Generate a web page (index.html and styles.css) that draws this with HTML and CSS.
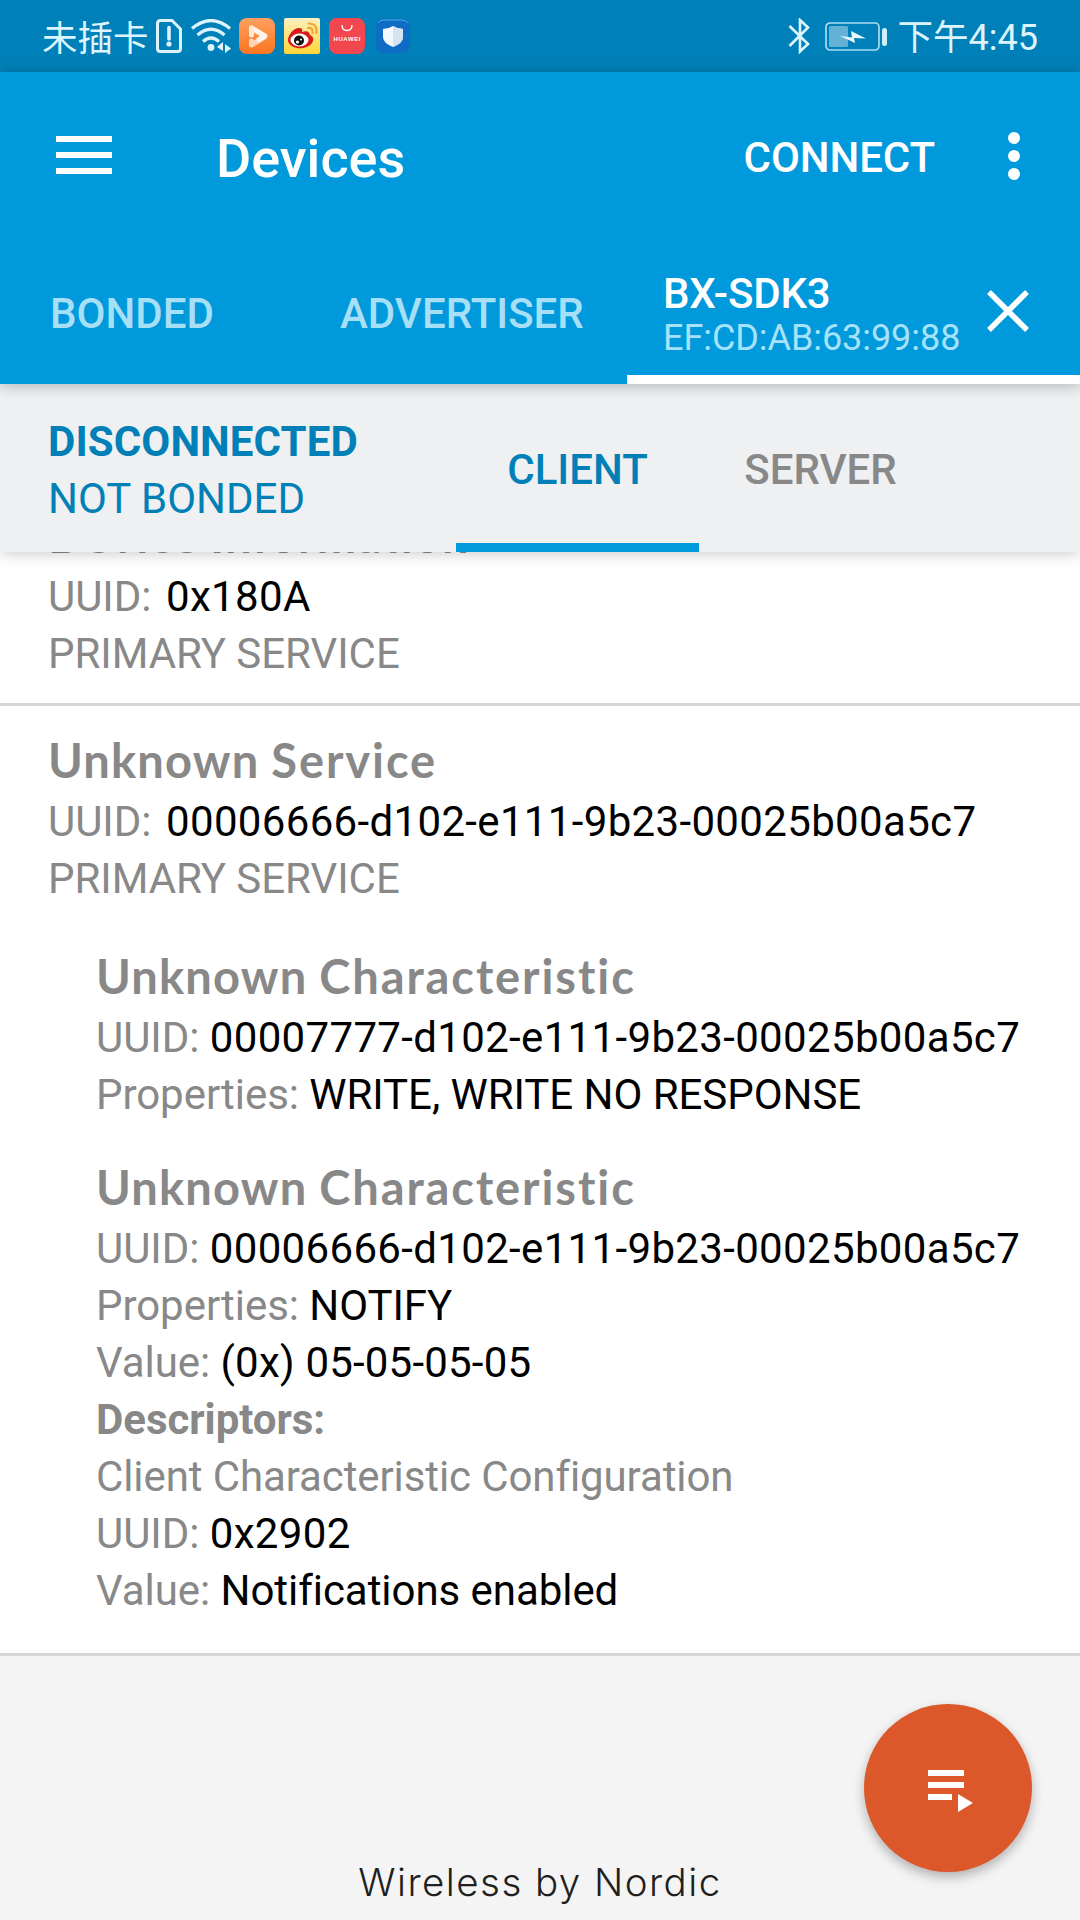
FILE: index.html
```html
<!DOCTYPE html>
<html lang="en">
<head>
<meta charset="utf-8">
<title>Devices</title>
<link rel="stylesheet" href="styles.css">
</head>
<body>
<div class="statusbar">
  <span class="carrier" lang="zh-CN">未插卡</span>
  <svg class="sim" width="26" height="34" viewBox="0 0 26 34" fill="none" stroke="#def4fd" stroke-width="3"><path d="M4.500 1.500H16L24.500 10V29.500Q24.500 32.500 21.500 32.500H4.500Q1.500 32.500 1.500 29.500V4.500Q1.500 1.500 4.500 1.500Z"/><path d="M13 8.500V20" stroke-width="3.600" stroke-linecap="round"/><circle cx="13" cy="25" r="2.600" fill="#def4fd" stroke="none"/></svg>
  <svg class="wifi" width="40" height="34" viewBox="0 0 40 34" fill="none" stroke="#def4fd" stroke-width="3.200"><path d="M1 9.500Q20-6.500 39 9.500"/><path d="M6.500 16Q20 4.500 33.500 16"/><path d="M12 22.500Q20 15.500 28 22.500"/><g fill="#def4fd" stroke="none"><circle cx="20" cy="28.500" r="3.400"/><path d="M26 28L32 23V32ZM34 25L40 29.500L34 34Z"/></g></svg>
  <svg class="app video" width="36" height="36" viewBox="0 0 36 36"><defs><linearGradient id="orange" x2="0" y2="1"><stop stop-color="#ff9f5e"/><stop offset="1" stop-color="#fb7521"/></linearGradient></defs><rect width="36" height="36" rx="8" fill="url(#orange)"/><g fill="none" stroke-linecap="round" stroke-linejoin="round" stroke-width="5"><path d="M12.500 23V27L25.500 19" stroke="#ffd3b5"/><path d="M12.500 10L26 18L20 21.500" stroke="#fff4eb"/><path d="M12.500 10V17" stroke="#ffe9d9"/></g></svg>
  <svg class="app weibo" width="36" height="36" viewBox="0 0 36 36"><defs><linearGradient id="yellow" x2="0" y2="1"><stop stop-color="#fdf0c1"/><stop offset="1" stop-color="#fed634"/></linearGradient></defs><rect width="36" height="36" rx="2" fill="url(#yellow)"/><path d="M4 22C4 17 10 9 16 10Q19 10.500 18 14Q25 11.500 26 17Q30 18.500 29 23C27 29 19 31 13 30C8 29 4 26 4 22Z" fill="#d91b1b"/><ellipse cx="15.500" cy="22" rx="9" ry="6.500" fill="#fff"/><ellipse cx="15" cy="22.500" rx="5" ry="5" fill="#111"/><circle cx="13.500" cy="24" r="1.600" fill="#fff"/><circle cx="17" cy="21.500" r="1" fill="#fff"/><path d="M24.500 5.500Q33.500 5 32.500 15M24 10Q29.500 9.500 28.500 15" fill="none" stroke="#f5a32b" stroke-width="2.200" stroke-linecap="round"/></svg>
  <svg class="app market" width="36" height="36" viewBox="0 0 36 36"><rect width="36" height="36" rx="8" fill="#f2474e"/><path d="M13 7Q13 12.500 18 12.500T23 7" fill="none" stroke="#fff" stroke-width="1.300"/><text class="brand" x="18" y="23.200" text-anchor="middle" textLength="27">HUAWEI</text></svg>
  <svg class="app shield" width="34" height="34" viewBox="0 0 34 34"><rect width="34" height="34" rx="7" fill="#0f6cc4"/><path d="M2 4Q4 1 8 1H26Q30 1 32 4" fill="none" stroke="#47adee"/><path d="M17 7Q21.500 10 27 10V18Q27 24 17 28Q7 24 7 18V10Q12.500 10 17 7Z" fill="#f2f8fd"/><path d="M17 7Q21.500 10 27 10V18Q27 24 17 28Z" fill="#d3e3f0"/></svg>
  <div class="status-right">
    <svg class="bt" width="22" height="36" viewBox="0 0 22 36" fill="none" stroke="#def4fd" stroke-width="2.600"><path d="M1.500 8L20 26L12 33.500V2L20 9.500L1.500 28"/></svg>
    <svg class="battery" width="62" height="30" viewBox="0 0 62 30"><rect x="1" y="1" width="53" height="27" rx="4" fill="none" stroke="#a9daef" stroke-width="1.700"/><rect x="4" y="4" width="19" height="21" rx="1.500" fill="#63b1d5"/><path d="M15 14L27 15.500L26 9L41 16.500L29 16L30 21Z" fill="#e8f8ff"/><rect x="57" y="6" width="5" height="18" rx="2.500" fill="#d2eefa"/></svg>
    <span class="clock"><span class="zh" lang="zh-CN">下午</span>4:45</span>
  </div>
</div>
<header class="appbar">
  <div class="toolbar">
    <svg class="menu" width="56" height="38" viewBox="0 0 56 38" fill="#fff"><path d="M0 0H56V6H0ZM0 16H56V22H0ZM0 32H56V38H0Z"/></svg>
    <h1 class="title">Devices</h1>
    <span class="connect">CONNECT</span>
    <svg width="12" height="48" viewBox="0 0 12 48" fill="#fff"><circle cx="6" cy="6" r="6"/><circle cx="6" cy="24" r="6"/><circle cx="6" cy="42" r="6"/></svg>
  </div>
  <nav class="tabs">
    <span class="tab bonded">BONDED</span>
    <span class="tab advertiser">ADVERTISER</span>
    <div class="tab-device">
      <div class="device"><span class="name">BX-SDK3</span><span class="address">EF:CD:AB:63:99:88</span></div>
      <svg class="close" width="42" height="42" viewBox="0 0 42 42" fill="none" stroke="#fff" stroke-width="5.500"><path d="M2 2L40 40M40 2L2 40"/></svg>
    </div>
  </nav>
</header>
<section class="connection">
  <div class="state"><span class="disconnected">DISCONNECTED</span><span>NOT BONDED</span></div>
  <span class="subtab client">CLIENT</span>
  <span class="subtab server">SERVER</span>
</section>
<main class="services">
  <article class="service first">
    <h2 class="tight">Device Information</h2>
    <p><span class="label">UUID:</span><b class="hex">0x180A</b></p>
    <p>PRIMARY SERVICE</p>
  </article>
  <article class="service second">
    <h2><span class="tight">Unknown</span> Service</h2>
    <p><span class="label">UUID:</span><b class="hex">00006666-d102-e111-9b23-00025b00a5c7</b></p>
    <p>PRIMARY SERVICE</p>
    <div class="characteristics">
      <section>
        <h2><span class="tight">Unknown</span> Characteristic</h2>
        <p>UUID: <b class="hex">00007777-d102-e111-9b23-00025b00a5c7</b></p>
        <p>Properties: <b>WRITE, WRITE NO RESPONSE</b></p>
      </section>
      <section>
        <h2><span class="tight">Unknown</span> Characteristic</h2>
        <p>UUID: <b class="hex">00006666-d102-e111-9b23-00025b00a5c7</b></p>
        <p>Properties: <b>NOTIFY</b></p>
        <p>Value: <b class="value">(0x) 05-05-05-05</b></p>
        <p class="strong">Descriptors:</p>
        <p class="descriptor">Client Characteristic Configuration</p>
        <p>UUID: <b class="hex">0x2902</b></p>
        <p>Value: <b>Notifications enabled</b></p>
      </section>
    </div>
  </article>
</main>
<footer class="footer">Wireless by Nordic</footer>
<div class="fab"><svg width="45" height="42" viewBox="0 0 45 42" fill="#fff"><path d="M0 0H36V6H0ZM0 12H36V18H0ZM0 24H24V30H0ZM30 24L45 33L30 42Z"/></svg></div>
</body>
</html>
```
FILE: styles.css
```css
* { box-sizing: border-box; }
body {
  margin: 0;
  width: 1080px;
  height: 1920px;
  overflow: hidden;
  position: relative;
  display: flex;
  flex-direction: column;
  background: #f4f4f4;
  font-family: Roboto, "Noto Sans CJK SC", sans-serif;
  font-size: 42px;
  line-height: 57px;
  color: #888;
}
h1, h2, p { margin: 0; }
svg { display: block; flex: none; }
span { white-space: nowrap; }

.statusbar {
  flex: none;
  height: 72px;
  display: flex;
  align-items: center;
  padding: 0 42px 0 42px;
  background: #0080b9;
  color: #def4fd;
}
.carrier { width: 114px; font: 400 35.500px/50px "Noto Sans CJK SC", sans-serif; }
.wifi { margin-left: 9px; }
.app { margin-left: 9px; }
.video { margin-left: 8px; }
.shield { margin-left: 11px; }
.brand { font: 700 6px "Liberation Sans", sans-serif; fill: #fff; }
.status-right { margin-left: auto; display: flex; align-items: center; }
.battery { margin: 2px 11px 0 15px; }
.clock { font-size: 36px; line-height: 50px; }
.zh { font: 400 35.500px/50px "Noto Sans CJK SC", sans-serif; }

.appbar {
  flex: none;
  height: 312px;
  position: relative;
  z-index: 3;
  background: #0099dc;
  color: #fff;
  box-shadow: 0 2px 14px rgba(0, 0, 0, .25);
}
.toolbar { height: 168px; display: flex; align-items: center; padding: 0 60px 0 56px; }
.menu { margin-bottom: 2px; }
.title { margin-left: 104px; font-size: 54px; font-weight: 500; line-height: 64px; padding-top: 5px; }
.connect { margin: 2px 73px 0 auto; font-weight: 500; letter-spacing: -.1px; }
.tabs { height: 144px; display: flex; }
.tab { color: #a6dff6; font-weight: 500; padding-top: 45px; }
.bonded { width: 340px; padding-left: 50px; }
.advertiser { width: 287px; }
.tab-device { flex: 1; border-bottom: 9px solid #fff; display: flex; padding: 29px 51px 0 36px; }
.device { display: flex; flex-direction: column; font-weight: 500; line-height: 50px; }
.name { letter-spacing: -.2px; }
.address { font-size: 36px; font-weight: 400; line-height: 39px; letter-spacing: -.06px; color: #a6e2fa; }
.close { margin: 21px 0 0 auto; }

.connection {
  flex: none;
  height: 168px;
  position: relative;
  z-index: 2;
  display: flex;
  background: #eef0f2;
  color: #0080b7;
  box-shadow: 0 2px 14px rgba(0, 0, 0, .2);
}
.state { width: 456px; padding: 29px 0 0 48px; display: flex; flex-direction: column; }
.disconnected { font-weight: 700; letter-spacing: .1px; }
.subtab { width: 243px; padding-top: 57px; text-align: center; font-weight: 500; }
.client { border-bottom: 9px solid #0099dc; }
.server { color: #888; }

.services { flex: none; height: 1104px; overflow: hidden; background: #fff; }
.service { border-bottom: 3px solid #d6d6d6; padding-left: 48px; white-space: nowrap; }
.first { margin-top: -42px; padding-bottom: 21px; }
.second { padding-top: 29px; padding-bottom: 34px; }
h2 { font: 700 47px/50px Lato, sans-serif; letter-spacing: 1.900px; word-spacing: -1.500px; padding-bottom: 8px; }
.tight { letter-spacing: 1.200px; }
p { letter-spacing: -.05px; }
b { font-weight: 400; color: #000; }
.hex { letter-spacing: .34px; }
.value { letter-spacing: .2px; }
.descriptor { letter-spacing: -.1px; }
.label { display: inline-block; width: 118px; }
.characteristics { padding: 44px 0 0 48px; display: flex; flex-direction: column; gap: 39px; }
.strong { font-weight: 700; }

.footer {
  flex: 1;
  padding-top: 198px;
  text-align: center;
  font: 300 38.500px/57px Inter, sans-serif;
  letter-spacing: 1.450px;
  color: #1f1f1f;
}
.fab {
  position: absolute;
  left: 864px;
  top: 1704px;
  width: 168px;
  height: 168px;
  border-radius: 50%;
  background: #dc582a;
  box-shadow: 0 5px 12px rgba(0, 0, 0, .28);
  padding: 66px 0 0 64px;
}
```
